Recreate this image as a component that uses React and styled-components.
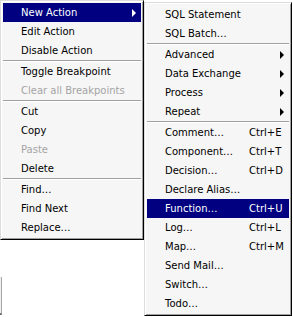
import React from 'react';
import styled, { createGlobalStyle } from 'styled-components';

const GlobalStyle = createGlobalStyle`
  html, body { margin: 0; padding: 0; background: #fff; }
  body { font-family: "DejaVu Sans", Verdana, sans-serif; font-size: 10px; }
`;

const Stage = styled.div`
  position: relative;
  display: flex;
  align-items: flex-start;
  width: 293px;
  height: 317px;
  overflow: hidden;
`;

// edge of the window lying behind the popup
const BackEdge = styled.div`
  position: absolute;
  left: 0;
  top: 277px;
  width: 1px;
  height: 36px;
  background: #f0f0f0;
  border-right: 1px solid #a8a8a8;
  border-bottom: 2px solid #707070;
`;

const Menu = styled.div`
  position: relative;
  box-sizing: border-box;
  width: ${p => p.$width}px;
  margin-top: ${p => p.$top || 0}px;
  background: #f6f6f6;
  border-top: 1px solid #dcdcdc;
  border-left: 1px solid #dcdcdc;
  border-right: 1px solid #000;
  border-bottom: 1px solid #000;
  box-shadow: inset 1px 1px #fff, inset -1px -1px #a0a0a0;
  padding: 2px;
  display: flex;
  flex-direction: column;
`;

const Item = styled.div`
  height: 19px;
  display: flex;
  align-items: center;
  padding-left: 18px;
  white-space: nowrap;
  color: ${p => (p.$active ? '#fff' : p.$disabled ? '#a4a4a4' : '#000')};
  background: ${p => (p.$active ? '#000080' : 'transparent')};
`;

const Label = styled.span`
  width: ${p => (p.$wide ? 84 : 'auto')}px;
`;

const Shortcut = styled.span``;

const Arrow = styled.span`
  margin-left: auto;
  margin-right: 5px;
  width: 0;
  height: 0;
  border-top: 4px solid transparent;
  border-bottom: 4px solid transparent;
  border-left: 4px solid currentColor;
`;

const Separator = styled.div`
  height: 0;
  border-top: 1px solid #a0a0a0;
  border-bottom: 1px solid #fff;
`;

const mainMenu = [
  { label: 'New Action', sub: true, active: true },
  { label: 'Edit Action' },
  { label: 'Disable Action' },
  '-',
  { label: 'Toggle Breakpoint' },
  { label: 'Clear all Breakpoints', disabled: true },
  '-',
  { label: 'Cut' },
  { label: 'Copy' },
  { label: 'Paste', disabled: true },
  { label: 'Delete' },
  '-',
  { label: 'Find...' },
  { label: 'Find Next' },
  { label: 'Replace...' },
];

const subMenu = [
  { label: 'SQL Statement' },
  { label: 'SQL Batch...' },
  '-',
  { label: 'Advanced', sub: true },
  { label: 'Data Exchange', sub: true },
  { label: 'Process', sub: true },
  { label: 'Repeat', sub: true },
  '-',
  { label: 'Comment...', key: 'Ctrl+E' },
  { label: 'Component...', key: 'Ctrl+T' },
  { label: 'Decision...', key: 'Ctrl+D' },
  { label: 'Declare Alias...' },
  { label: 'Function...', key: 'Ctrl+U', active: true },
  { label: 'Log...', key: 'Ctrl+L' },
  { label: 'Map...', key: 'Ctrl+M' },
  { label: 'Send Mail...' },
  { label: 'Switch...' },
  { label: 'Todo...' },
];

const renderItems = items =>
  items.map((it, i) =>
    it === '-' ? (
      <Separator key={i} />
    ) : (
      <Item key={i} $active={it.active} $disabled={it.disabled}>
        <Label $wide={!!it.key}>{it.label.replace('...', '\u2026')}</Label>
        {it.key && <Shortcut>{it.key}</Shortcut>}
        {it.sub && <Arrow />}
      </Item>
    )
  );

const App = () => {
  return (
    <>
      <GlobalStyle />
      <Stage>
        <BackEdge />
        <Menu $width={144}>{renderItems(mainMenu)}</Menu>
        <Menu $width={148} $top={2}>{renderItems(subMenu)}</Menu>
      </Stage>
    </>
  );
};

export default App;
